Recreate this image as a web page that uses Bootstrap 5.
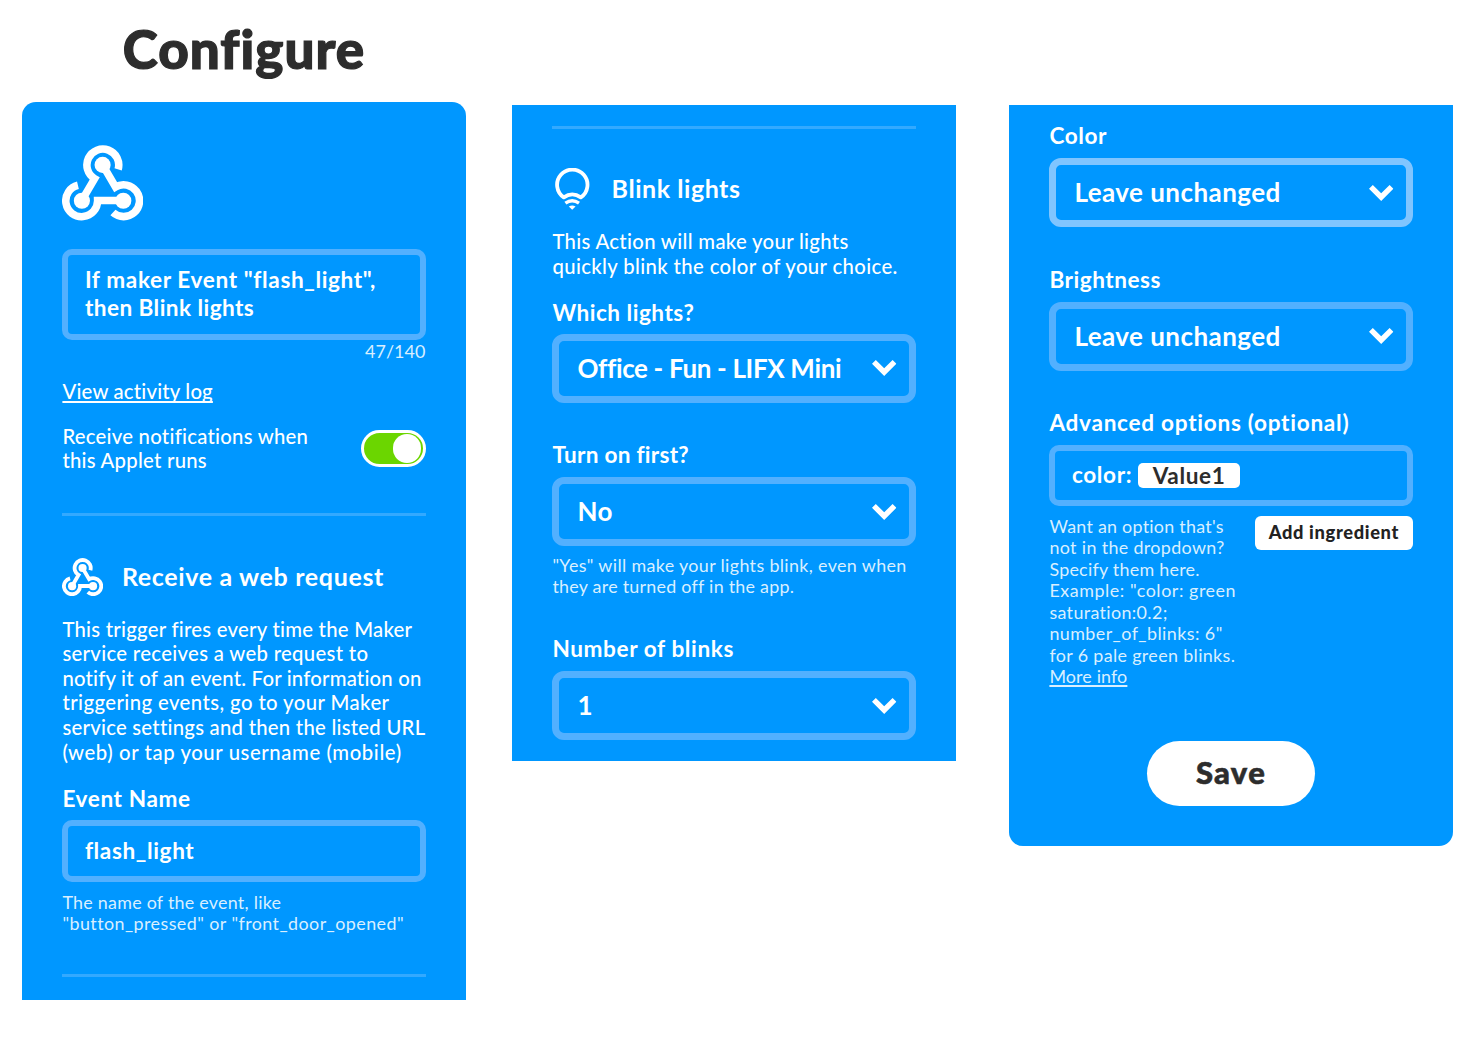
<!DOCTYPE html>
<html lang="en">
<head>
<meta charset="utf-8">
<meta name="viewport" content="width=device-width, initial-scale=1">
<title>Configure</title>
<link href="https://cdn.jsdelivr.net/npm/bootstrap@5.3.0/dist/css/bootstrap.min.css" rel="stylesheet">
<style>
  body { font-family: Lato, "Open Sans", sans-serif; color: #fff; background: #fff; min-width: 1483px; }
  .stage { padding: 0 30px 46px 22px; height: 1046px; overflow: hidden; }
  .page-title { width: 444px; height: 102px; padding-top: 17px; font-size: 53px; line-height: 64px; font-weight: 900; letter-spacing: 1px; color: #2d2d2d; -webkit-text-stroke: 1.2px #2d2d2d; }
  .panel { width: 444px; background: #0097ff; padding: 0 40.4px; flex: none; }
  .panel-a { height: 898px; border-radius: 14px 14px 0 0; padding-top: 43px; }
  .panel-b { height: 656px; margin: 3px 53px 0 46px; padding-top: 21px; }
  .panel-c { height: 741px; margin-top: 3px; padding-top: 17px; border-radius: 0 0 14px 14px; }
  .stage svg { display: block; flex: none; }
  .rule { height: 2.5px; background: #33a9ff; }
  .copy { font-size: 20.3px; line-height: 24.6px; font-weight: 500; letter-spacing: .26px; white-space: nowrap; margin: 0; }
  .hint { font-size: 17.9px; line-height: 21.5px; font-weight: 400; letter-spacing: .35px; color: #d9efff; white-space: nowrap; margin: 0; }
  .field-label { display: block; font-size: 22.6px; line-height: 28px; font-weight: 700; letter-spacing: .6px; white-space: nowrap; }
  .section-title { font-size: 25px; line-height: 30px; font-weight: 700; letter-spacing: .66px; margin: 0; padding-bottom: 2px; }
  .box { border: 6px solid #52b0ff; border-radius: 10px; font-size: 22.6px; font-weight: 700; line-height: 28px; letter-spacing: .62px; padding: 0 16.5px; }
  .pick { border: 7px solid #52b0ff; border-radius: 12px; font-size: 26px; font-weight: 700; letter-spacing: .45px; padding: 0 12px 0 18px; height: 69px; }
  .pick.active { border-color: #80c5ff; }
  .tight { letter-spacing: -.34px; }
  .snug { letter-spacing: .25px; }
  .airy { letter-spacing: .6px; }
  .loose { letter-spacing: .43px; }
  .slim { letter-spacing: .12px; }
  .switch { width: 65px; height: 37.5px; border: 3px solid #fff; border-radius: 20px; background: #6bd600; padding: 0 1.5px; }
  .knob { width: 28.5px; height: 28.5px; border-radius: 50%; background: #fff; }
  .plain-link, .plain-link:hover { color: inherit; text-decoration: underline; text-decoration-thickness: 1.5px; text-underline-offset: 2px; text-decoration-skip-ink: none; }
  .token { width: 102px; height: 25px; line-height: 25px; background: #fff; color: #2d2d2d; border-radius: 5px; text-align: center; font-weight: 700; margin-left: 6px; }
  .ingredient { width: 157.5px; height: 34.5px; border: 0; border-radius: 6px; background: #fff; color: #222; font-size: 18.3px; font-weight: 900; letter-spacing: .65px; padding: 0; white-space: nowrap; }
  .save { width: 168px; height: 65px; border: 0; border-radius: 33px; background: #fff; color: #2d2d2d; font-size: 31px; font-weight: 900; letter-spacing: 1.3px; padding: 0 0 3px; -webkit-text-stroke: .6px #2d2d2d; }
</style>
</head>
<body>
<svg width="0" height="0" class="position-absolute" aria-hidden="true">
  <symbol id="hook" viewBox="7.2 4.6 81.4 76.2">
    <g fill="none" stroke="#fff" stroke-width="7.6">
      <path d="M63.6 29A16 16 0 1 0 40 38.3L27 60.5"/>
      <path d="M48 24.5L61 46.7A16 16 0 1 1 58.4 72.4"/>
      <path d="M23.2 45A16 16 0 1 0 43 60.2H69"/>
    </g>
    <g fill="#fff"><circle cx="48" cy="24.5" r="8.1"/><circle cx="27.2" cy="60.5" r="8.1"/><circle cx="68.8" cy="60.5" r="8.1"/></g>
  </symbol>
  <symbol id="chev" viewBox="0 0 24.4 16"><path fill="#fff" d="M0 3.8L3.8 0l8.4 8.3L20.6 0l3.8 3.8L12.2 16z"/></symbol>
</svg>

<main class="stage">
  <h1 class="page-title text-center mb-0">Configure</h1>
  <div class="d-flex align-items-start">

    <section class="panel panel-a">
      <svg width="81" height="76"><use href="#hook"/></svg>
      <div class="box d-flex align-items-center" style="height:90.5px;margin-top:28px"><div>If maker Event "flash_light",<br><span class="loose">then Blink lights</span></div></div>
      <div class="hint text-end" style="margin-top:1.5px"><span class="slim">47/140</span></div>
      <div class="copy" style="margin-top:16px"><a href="#" class="plain-link" style="letter-spacing:.2px">View activity log</a></div>
      <div class="d-flex justify-content-between align-items-center" style="margin-top:20.7px">
        <p class="copy">Receive notifications when<br>this Applet runs</p>
        <div class="switch d-flex align-items-center justify-content-end"><div class="knob"></div></div>
      </div>
      <div class="rule" style="margin-top:40.3px"></div>
      <div class="d-flex align-items-center" style="margin-top:42px;height:38.5px">
        <svg width="41" height="38.4"><use href="#hook"/></svg>
        <h2 class="section-title" style="margin-left:18.5px">Receive a web request</h2>
      </div>
      <p class="copy" style="margin-top:20.4px">This trigger fires every time the Maker<br><span style="letter-spacing:.33px">service receives a web request to</span><br><span class="snug" style="letter-spacing:.21px">notify it of an event. For information on</span><br><span class="loose">triggering events, go to your Maker</span><br>service settings and then the listed URL<br><span class="airy">(web) or tap your username (mobile)</span></p>
      <span class="field-label" style="margin-top:20.3px">Event Name</span>
      <div class="box d-flex align-items-center" style="height:62.5px;margin-top:7px">flash_light</div>
      <p class="hint" style="margin-top:9.5px"><span class="snug">The name of the event, like</span><br><span class="loose">"button_pressed" or "front_door_opened"</span></p>
      <div class="rule" style="margin-top:39.5px"></div>
    </section>

    <section class="panel panel-b">
      <div class="rule"></div>
      <div class="d-flex align-items-center" style="margin-top:39.5px;height:42px">
        <svg width="41" height="43" viewBox="-2.8 -.2 41 43" fill="none" stroke="#fff" stroke-width="3.8">
          <path stroke-linejoin="round" d="M9 29.2A15.2 15.2 0 1 1 26 29.2Q17.4 23.2 9 29.2Z"/>
          <path stroke-width="3.4" d="M10.6 35Q17.4 30.2 24.2 35"/>
          <path fill="#fff" stroke="none" d="M14 38.3q3.4-2.2 6.8 0L17.4 41.6z"/>
        </svg>
        <h2 class="section-title" style="margin-left:18.2px;letter-spacing:.55px">Blink lights</h2>
      </div>
      <p class="copy" style="margin-top:19px"><span style="letter-spacing:.33px">This Action will make your lights</span><br><span style="letter-spacing:.38px">quickly blink the color of your choice.</span></p>
      <span class="field-label" style="margin-top:20.8px;letter-spacing:.5px">Which lights?</span>
      <div class="pick d-flex align-items-center justify-content-between" style="margin-top:7px"><span class="tight">Office - Fun - LIFX Mini</span><svg width="24.4" height="16"><use href="#chev"/></svg></div>
      <span class="field-label snug" style="margin-top:38px">Turn on first?</span>
      <div class="pick d-flex align-items-center justify-content-between" style="margin-top:8.3px"><span>No</span><svg width="24.4" height="16"><use href="#chev"/></svg></div>
      <p class="hint" style="margin-top:8.6px">"Yes" will make your lights blink, even when<br><span class="snug">they are turned off in the app.</span></p>
      <span class="field-label" style="margin-top:37px">Number of blinks</span>
      <div class="pick d-flex align-items-center justify-content-between" style="margin-top:8.6px"><span>1</span><svg width="24.4" height="16"><use href="#chev"/></svg></div>
    </section>

    <section class="panel panel-c">
      <span class="field-label">Color</span>
      <div class="pick active d-flex align-items-center justify-content-between" style="margin-top:8.3px"><span>Leave unchanged</span><svg width="24.4" height="16"><use href="#chev"/></svg></div>
      <span class="field-label" style="margin-top:38.5px;letter-spacing:.5px">Brightness</span>
      <div class="pick d-flex align-items-center justify-content-between" style="margin-top:7.8px"><span>Leave unchanged</span><svg width="24.4" height="16"><use href="#chev"/></svg></div>
      <span class="field-label" style="margin-top:38.2px;letter-spacing:.72px">Advanced options (optional)</span>
      <div class="box d-flex align-items-center" style="height:61px;margin-top:8px"><span>color:</span><span class="token">Value1</span></div>
      <div class="d-flex justify-content-between align-items-start" style="margin-top:10px">
        <p class="hint"><span class="snug">Want an option that's</span><br>not in the dropdown?<br><span class="snug">Specify them here.</span><br><span style="letter-spacing:.55px">Example: "color: green</span><br>saturation:0.2;<br><span class="loose">number_of_blinks: 6"</span><br>for 6 pale green blinks.<br><a href="#" class="plain-link slim">More info</a></p>
        <button class="ingredient btn">Add ingredient</button>
      </div>
      <div class="d-flex justify-content-center" style="margin-top:53.3px"><button class="save btn">Save</button></div>
    </section>
  </div>
</main>
<script src="https://cdn.jsdelivr.net/npm/bootstrap@5.3.0/dist/js/bootstrap.bundle.min.js"></script>
</body>
</html>
